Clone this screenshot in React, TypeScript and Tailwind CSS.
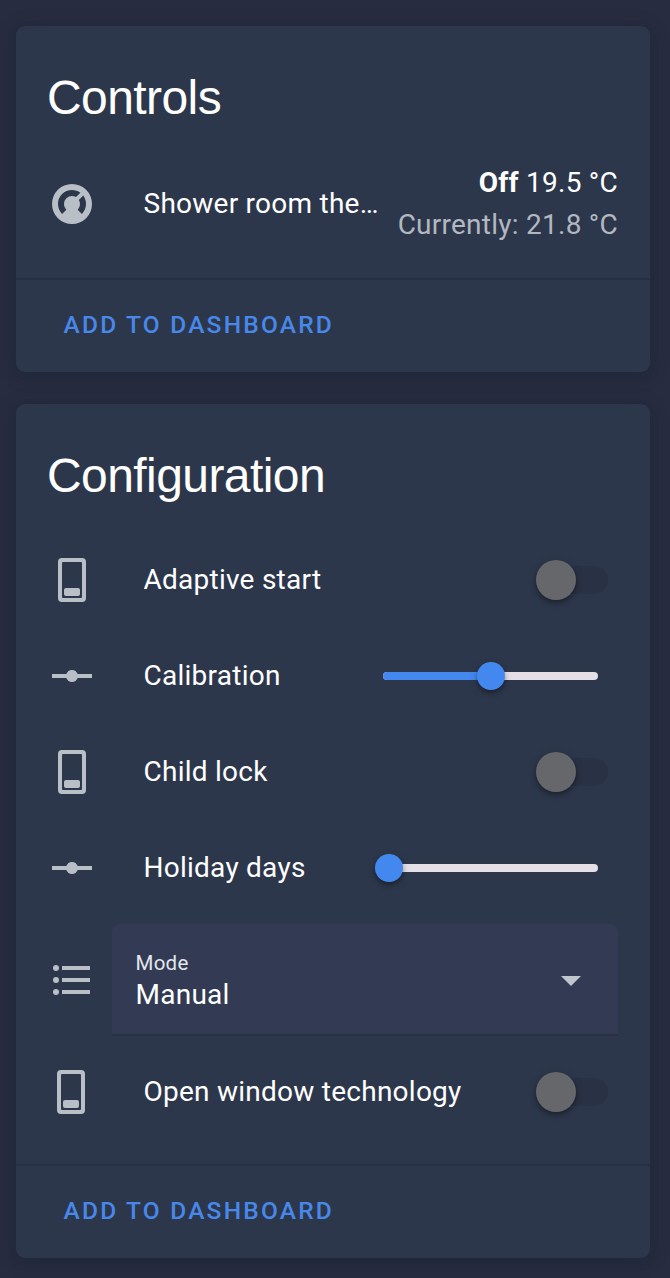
import type { ReactNode } from "react";

const ICONS = {
  thermostat:
    "M16.95,16.95L14.83,14.83C15.55,14.1 16,13.1 16,12C16,11.26 15.79,10.57 15.43,10L17.6,7.81C18.5,9 19,10.43 19,12C19,13.93 18.22,15.68 16.95,16.95M12,5C13.57,5 15,5.5 16.19,6.4L14,8.56C13.43,8.21 12.74,8 12,8A4,4 0 0,0 8,12C8,13.1 8.45,14.1 9.17,14.83L7.05,16.95C5.78,15.68 5,13.93 5,12A7,7 0 0,1 12,5M12,2A10,10 0 0,0 2,12A10,10 0 0,0 12,22A10,10 0 0,0 22,12A10,10 0 0,0 12,2Z",
  toggle:
    "M7,1H17A2,2 0 0,1 19,3V21A2,2 0 0,1 17,23H7A2,2 0 0,1 5,21V3A2,2 0 0,1 7,1M7.5,3A0.5,0.5 0 0,0 7,3.5V20.5A0.5,0.5 0 0,0 7.5,21H16.5A0.5,0.5 0 0,0 17,20.5V3.5A0.5,0.5 0 0,0 16.5,3H7.5M9,16H15A1,1 0 0,1 16,17V19A1,1 0 0,1 15,20H9A1,1 0 0,1 8,19V17A1,1 0 0,1 9,16Z",
  vertex:
    "M2,11H9.17C9.58,9.83 10.69,9 12,9C13.31,9 14.42,9.83 14.83,11H22V13H14.83C14.42,14.17 13.31,15 12,15C10.69,15 9.58,14.17 9.17,13H2V11Z",
  list: "M7,5H21V7H7V5M7,13V11H21V13H7M4,4.5A1.5,1.5 0 0,1 5.5,6A1.5,1.5 0 0,1 4,7.5A1.5,1.5 0 0,1 2.5,6A1.5,1.5 0 0,1 4,4.5M4,10.5A1.5,1.5 0 0,1 5.5,12A1.5,1.5 0 0,1 4,13.5A1.5,1.5 0 0,1 2.5,12A1.5,1.5 0 0,1 4,10.5M7,19V17H21V19H7M4,16.5A1.5,1.5 0 0,1 5.5,18A1.5,1.5 0 0,1 4,19.5A1.5,1.5 0 0,1 2.5,18A1.5,1.5 0 0,1 4,16.5Z",
};

function Icon({ name, className = "" }: { name: keyof typeof ICONS; className?: string }) {
  return (
    <svg viewBox="0 0 24 24" className={`size-12 shrink-0 fill-[#b9bfc7] ${className}`} aria-hidden="true">
      <path fillRule="evenodd" d={ICONS[name]} />
    </svg>
  );
}

function Card({ title, children }: { title: string; children: ReactNode }) {
  return (
    <section className="rounded-[9px] bg-[#2d374b] shadow-[0_4px_10px_rgba(16,36,50,0.24),0_2px_20px_rgba(16,36,50,0.22)]">
      <h1 className="h-[136px] pt-6 pr-8 pl-[31px] font-['Liberation_Sans',sans-serif] text-[48px] leading-[96px] tracking-[-0.576px]">
        {title}
      </h1>
      <div className="flex flex-col gap-4 px-8 pb-8">{children}</div>
      <footer className="h-[94px] border-t-2 border-[#272f42] pr-12 pl-[47.5px] pt-[9px]">
        <button className="h-[72px] text-[24.5px] font-medium tracking-[2.2px] text-[#4788ea]">ADD TO DASHBOARD</button>
      </footer>
    </section>
  );
}

function Row({ icon, label, iconClass, children }: { icon: keyof typeof ICONS; label: string; iconClass?: string; children: ReactNode }) {
  return (
    <div className="flex min-h-20 items-center">
      <Icon name={icon} className={iconClass} />
      <span className="ml-[47.5px] min-w-0 flex-1 truncate">{label}</span>
      {children}
    </div>
  );
}

function Toggle() {
  return (
    <div className="mr-[10px] flex h-7 w-[68px] items-center rounded-full bg-[#293144]">
      <span className="-ml-1 size-10 rounded-full bg-[#66676b] shadow-[0_3px_4px_rgba(0,0,0,0.28),0_2px_8px_rgba(0,0,0,0.16)]" />
    </div>
  );
}

function Slider({ value }: { value: number }) {
  return (
    <div className="relative mr-5 h-2 w-[215px] rounded-full bg-[#e5e0e7]">
      <div className="h-2 rounded-l-full bg-[#4388ef]" style={{ width: `${value}%` }} />
      <span
        className="absolute -top-[10px] size-7 -translate-x-1/2 rounded-full bg-[#4388ef] shadow-[0_3px_4px_rgba(0,0,0,0.28),0_2px_8px_rgba(0,0,0,0.16)]"
        style={{ left: `${value}%` }}
      />
    </div>
  );
}

export default function App() {
  return (
    <main className="flex h-[1278px] w-[670px] flex-col gap-8 overflow-hidden bg-[#282c40] pt-[26px] pr-5 pl-4 font-[Roboto,sans-serif] text-[28px] leading-[42px] tracking-[0.25px] text-white">
      <Card title="Controls">
        <Row icon="thermostat" label="Shower room thermostat">
          <div className="ml-4 text-right whitespace-nowrap">
            <div>
              <b className="font-bold">Off</b> 19.5 °C
            </div>
            <div className="text-[#b2b7c0]">Currently: 21.8 °C</div>
          </div>
        </Row>
      </Card>
      <Card title="Configuration">
        <Row icon="toggle" label="Adaptive start">
          <Toggle />
        </Row>
        <Row icon="vertex" label="Calibration">
          <Slider value={50} />
        </Row>
        <Row icon="toggle" label="Child lock">
          <Toggle />
        </Row>
        <Row icon="vertex" label="Holiday days">
          <Slider value={2.8} />
        </Row>
        <div className="flex items-center gap-4">
          <Icon name="list" />
          <div className="flex h-28 flex-1 items-center justify-between rounded-t-lg border-b-2 border-[#272f42] bg-[#323b53] pr-[37px] pl-[23.5px]">
            <div className="flex flex-col pt-[3px]">
              <span className="text-[20.5px] leading-7 text-[#e3e6ed]">Mode</span>
              <span className="leading-9">Manual</span>
            </div>
            <svg viewBox="0 0 20 10" className="mt-[3px] h-[10px] w-5 fill-[#c1c5ce]" aria-hidden="true">
              <path d="M0 0h20L10 10z" />
            </svg>
          </div>
        </div>
        <Row icon="toggle" iconClass="relative -left-px" label="Open window technology">
          <Toggle />
        </Row>
      </Card>
    </main>
  );
}
